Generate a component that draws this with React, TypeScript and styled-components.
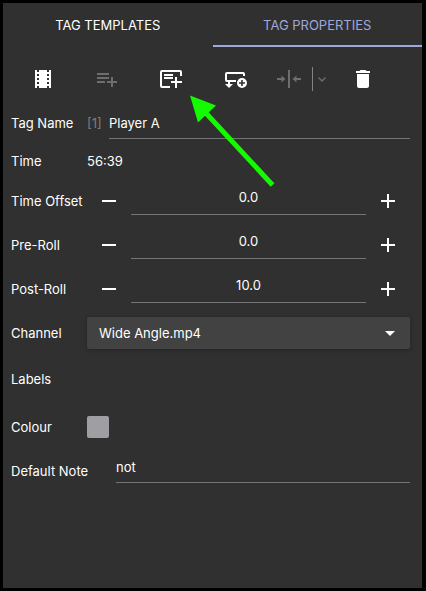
import React, { useState } from "react";
import styled, { createGlobalStyle } from "styled-components";

const GlobalStyle = createGlobalStyle`
  *, *::before, *::after { box-sizing: border-box; }
  body { margin: 0; background: #000; }
  button, input, select { font: inherit; color: inherit; }
`;

const Frame = styled.div`
  position: relative;
  display: flex;
  min-height: 100vh;
  padding: 3px 4px 3px 3px;
  background: #000;
  color: #fff;
  font: 13px/20px Inter, "Liberation Sans", sans-serif;
`;

const Panel = styled.main`
  flex: 1;
  min-width: 0;
  background: #303030;
`;

const Tabs = styled.div`
  display: grid;
  grid-template-columns: 1fr 1fr;
`;

const Tab = styled.button<{ $active?: boolean }>`
  height: 44px;
  padding: 2px 0 0;
  border: 0;
  border-bottom: 2px solid ${(p) => (p.$active ? "#9fa8da" : "transparent")};
  background: none;
  color: ${(p) => (p.$active ? "#9fa8da" : "#fff")};
  text-transform: uppercase;
  cursor: pointer;
`;

const Toolbar = styled.div`
  display: grid;
  grid-template-columns: repeat(6, 1fr);
  height: 56px;
  padding: 8px 27px 0 8px;
`;

const ToolGroup = styled.div`
  display: flex;
  align-items: center;
  justify-content: center;
  padding-left: 6px;
`;

const ToolButton = styled.button`
  display: flex;
  align-items: center;
  justify-content: center;
  padding: 0;
  border: 0;
  background: none;
  color: #fff;
  cursor: pointer;
  &:disabled { color: #6e6e6e; cursor: default; }
`;

const SplitDivider = styled.span`
  width: 1px;
  height: 24px;
  margin: 0 4px 0 11px;
  background: #838383;
`;

const Row = styled.div<{ $height: number }>`
  display: grid;
  grid-template-columns: 76px minmax(0, 1fr);
  align-items: center;
  height: ${(p) => p.$height}px;
  padding: 0 12px 0 8px;
`;

const Label = styled.label`
  white-space: nowrap;
`;

const NameField = styled.div`
  display: grid;
  grid-template-columns: 22px minmax(0, 1fr);
  align-items: center;
`;

const Count = styled.span`
  color: #7d7d7d;
`;

const TextInput = styled.input`
  width: 100%;
  height: 32px;
  padding: 0;
  border: 0;
  border-bottom: 1px solid #757575;
  border-radius: 0;
  outline: none;
  background: none;
`;

const Stepper = styled.div`
  display: grid;
  grid-template-columns: 44px minmax(0, 1fr) 44px;
  align-items: center;
`;

const StepInput = styled(TextInput)`
  height: 28px;
  padding-bottom: 7px;
  text-align: center;
`;

const NoteField = styled.div`
  padding: 0 0 4px 29px;
`;

const NoteInput = styled(TextInput)`
  display: block;
  height: 28px;
  padding-bottom: 3px;
`;

const SelectBox = styled.div`
  position: relative;
  svg {
    position: absolute;
    right: 8px;
    top: 4px;
    pointer-events: none;
  }
`;

const Select = styled.select`
  display: block;
  width: 100%;
  height: 32px;
  padding: 0 32px 0 12px;
  border: 0;
  border-radius: 2px;
  appearance: none;
  background: #424242;
  box-shadow: 0 1px 4px rgba(0, 0, 0, 0.3);
`;

const Swatch = styled.button`
  width: 22px;
  height: 22px;
  padding: 0;
  border: 0;
  border-radius: 2px;
  background: #9e9ea3;
`;

const Pointer = styled.svg`
  position: absolute;
  left: 186px;
  top: 92px;
  pointer-events: none;
`;

const Icon = ({ children }: { children: React.ReactNode }) => (
  <svg width="24" height="24" viewBox="0 0 24 24" fill="currentColor" aria-hidden="true">
    {children}
  </svg>
);

const FilmIcon = () => (
  <Icon>
    <path d="M18 3v2h-2V3H8v2H6V3H4v18h2v-2h2v2h8v-2h2v2h2V3h-2zM8 17H6v-2h2v2zm0-4H6v-2h2v2zm0-4H6V7h2v2zm10 8h-2v-2h2v2zm0-4h-2v-2h2v2zm0-4h-2V7h2v2z" />
  </Icon>
);

const PlaylistAddIcon = () => (
  <Icon>
    <path d="M14 10H2v2h12v-2zm0-4H2v2h12V6zm4 8v-4h-2v4h-4v2h4v4h2v-4h4v-2h-4zM2 16h8v-2H2v2z" />
  </Icon>
);

const NoteAddIcon = () => (
  <Icon>
    <path
      d="M22 9V5Q22 4 21 4H3Q2 4 2 5V19Q2 20 3 20H11"
      fill="none"
      stroke="currentColor"
      strokeWidth="2"
    />
    <path d="M5 7h9v2H5zM5 10h9v2H5zM16 10h2v4h5v2h-5v5h-2v-5h-4v-2h4z" />
  </Icon>
);

const LoopAddIcon = () => (
  <Icon>
    <path
      d="M21 9V7Q21 6 20 6H4Q3 6 3 7V13Q3 14 4 14H13"
      fill="none"
      stroke="currentColor"
      strokeWidth="2"
    />
    <path d="M5 14h2v3h3l-4 4-4-4h3z" />
    <path
      fillRule="evenodd"
      d="M19 11a5 5 0 1 0 0 10a5 5 0 1 0 0-10zM18.200 13h1.600v2.200H22v1.600h-2.200V19h-1.600v-2.200H16v-1.600h2.200z"
    />
  </Icon>
);

const MergeIcon = () => (
  <Icon>
    <path d="M11 3h2v18h-2zM0 11h4.500V8.500L8.500 12l-4 3.500V13H0zM24 11h-4.500V8.500L15.500 12l4 3.500V13H24z" />
  </Icon>
);

const ChevronIcon = () => (
  <svg width="10" height="24" viewBox="0 0 10 24" fill="none" stroke="currentColor" aria-hidden="true">
    <path d="M1.500 10.500L5 14L8.500 10.500" strokeWidth="1.400" />
  </svg>
);

const TrashIcon = () => (
  <Icon>
    <path d="M6 19c0 1.100.9 2 2 2h8c1.100 0 2-.9 2-2V7H6v12zM19 4h-3.500l-1-1h-5l-1 1H5v2h14V4z" />
  </Icon>
);

const MinusIcon = () => (
  <Icon>
    <path d="M5 11h14v2H5z" />
  </Icon>
);

const PlusIcon = () => (
  <Icon>
    <path d="M19 13h-6v6h-2v-6H5v-2h6V5h2v6h6v2z" />
  </Icon>
);

const CaretIcon = () => (
  <Icon>
    <path d="M7 10l5 5 5-5z" />
  </Icon>
);

function StepRow({ id, label, initial }: { id: string; label: string; initial: number }) {
  const [value, setValue] = useState(initial.toFixed(1));
  const step = (delta: number) => setValue(((parseFloat(value) || 0) + delta).toFixed(1));
  return (
    <Row $height={44}>
      <Label htmlFor={id}>{label}</Label>
      <Stepper>
        <ToolButton aria-label={`Decrease ${label}`} onClick={() => step(-1)}>
          <MinusIcon />
        </ToolButton>
        <StepInput id={id} value={value} onChange={(e) => setValue(e.target.value)} />
        <ToolButton aria-label={`Increase ${label}`} onClick={() => step(1)}>
          <PlusIcon />
        </ToolButton>
      </Stepper>
    </Row>
  );
}

export default function App() {
  return (
    <Frame>
      <GlobalStyle />
      <Panel>
        <Tabs role="tablist">
          <Tab role="tab" aria-selected={false}>Tag Templates</Tab>
          <Tab role="tab" aria-selected $active>Tag Properties</Tab>
        </Tabs>
        <Toolbar role="toolbar">
          <ToolButton aria-label="Clip"><FilmIcon /></ToolButton>
          <ToolButton aria-label="Add to playlist" disabled><PlaylistAddIcon /></ToolButton>
          <ToolButton aria-label="Add note"><NoteAddIcon /></ToolButton>
          <ToolButton aria-label="Add loop"><LoopAddIcon /></ToolButton>
          <ToolGroup>
            <ToolButton aria-label="Merge tags" disabled><MergeIcon /></ToolButton>
            <SplitDivider />
            <ToolButton aria-label="Merge options" disabled><ChevronIcon /></ToolButton>
          </ToolGroup>
          <ToolButton aria-label="Delete"><TrashIcon /></ToolButton>
        </Toolbar>

        <Row $height={40}>
          <Label htmlFor="tag-name">Tag Name</Label>
          <NameField>
            <Count>[1]</Count>
            <TextInput id="tag-name" defaultValue="Player A" />
          </NameField>
        </Row>
        <Row $height={36}>
          <span>Time</span>
          <span>56:39</span>
        </Row>
        <StepRow id="time-offset" label="Time Offset" initial={0} />
        <StepRow id="pre-roll" label="Pre-Roll" initial={0} />
        <StepRow id="post-roll" label="Post-Roll" initial={10} />
        <Row $height={44}>
          <Label htmlFor="channel">Channel</Label>
          <SelectBox>
            <Select id="channel" defaultValue="Wide Angle.mp4">
              <option>Wide Angle.mp4</option>
            </Select>
            <CaretIcon />
          </SelectBox>
        </Row>
        <Row $height={48}>
          <span>Labels</span>
        </Row>
        <Row $height={48}>
          <Label htmlFor="colour">Colour</Label>
          <Swatch id="colour" />
        </Row>
        <Row $height={40}>
          <Label htmlFor="default-note">Default Note</Label>
          <NoteField>
            <NoteInput id="default-note" defaultValue="not" />
          </NoteField>
        </Row>
      </Panel>
      <Pointer width="92" height="98" viewBox="186 92 92 98" aria-hidden="true">
        <path d="M204 111L272.500 185" stroke="#14fa00" strokeWidth="5" />
        <path d="M190 95.500L216 105.500L198 122.500Z" fill="#14fa00" />
      </Pointer>
    </Frame>
  );
}
